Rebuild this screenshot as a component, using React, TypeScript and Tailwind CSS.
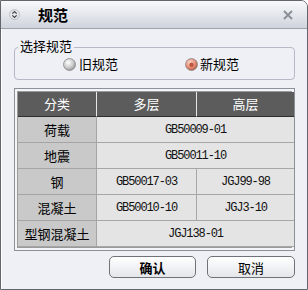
import React from "react";

const cjk = { fontFamily: '"Noto Sans CJK SC", "Noto Sans", sans-serif' };
const mono = { fontFamily: '"Liberation Mono", monospace', letterSpacing: "-1.1px" };

function Radio({ checked }: { checked?: boolean }) {
  return (
    <svg width="13" height="13" viewBox="0 0 13 13">
      <defs>
        <radialGradient id="rg0" cx="40%" cy="35%" r="70%">
          <stop offset="0%" stopColor="#ffffff" />
          <stop offset="60%" stopColor="#c9c9c9" />
          <stop offset="100%" stopColor="#8e8e8e" />
        </radialGradient>
        <radialGradient id="rg1" cx="40%" cy="35%" r="70%">
          <stop offset="0%" stopColor="#fbe1d8" />
          <stop offset="55%" stopColor="#e5907a" />
          <stop offset="100%" stopColor="#b0553f" />
        </radialGradient>
      </defs>
      <circle cx="6.5" cy="6.5" r="6" fill={checked ? "url(#rg1)" : "url(#rg0)"} stroke="#8a8a8a" strokeWidth="0.8" />
      {checked && <circle cx="6.5" cy="6.8" r="2.2" fill="#c0553d" />}
    </svg>
  );
}

function NameCell({ children }: { children: React.ReactNode }) {
  return (
    <div className="flex items-center justify-center bg-[#c9c9c9] border-b border-r border-[#a5a5a5]">
      <span className="block w-full text-center text-[13px] text-black" style={cjk}>
        {children}
      </span>
    </div>
  );
}

function CodeCell({ children, span, last }: { children: React.ReactNode; span?: boolean; last?: boolean }) {
  return (
    <div
      className={
        "flex items-center justify-center bg-[#e4e4e4] border-b border-[#a7a7a7] " +
        (span ? "col-span-2 " : "") +
        (last ? "" : "border-r ")
      }
    >
      <span className="block w-full text-center text-[12px] text-[#111]" style={mono}>
        {children}
      </span>
    </div>
  );
}

export default function App() {
  const rows: { name: string; a: string; b?: string }[] = [
    { name: "荷载", a: "GB50009-01" },
    { name: "地震", a: "GB50011-10" },
    { name: "钢", a: "GB50017-03", b: "JGJ99-98" },
    { name: "混凝土", a: "GB50010-10", b: "JGJ3-10" },
    { name: "型钢混凝土", a: "JGJ138-01" },
  ];
  return (
    <div
      className="w-[308px] h-[290px] flex flex-col border border-[#62656c] rounded-tr-[7px] bg-[#eef0f5] overflow-hidden"
      style={cjk}
    >
      <div className="h-[28px] flex items-center bg-gradient-to-b from-[#f8f9fb] via-[#e4e7ec] to-[#cfd4dc] border-b border-[#9ea3ad] pl-[8px] pr-[14px]">
        <svg width="11" height="11" viewBox="0 0 11 11">
          <circle cx="5.5" cy="5.5" r="5" fill="#e3e6ea" stroke="#b4b8bf" strokeWidth="0.8" />
          <path d="M3.3 4.6 L5.5 2.6 L7.7 4.6" fill="none" stroke="#444" strokeWidth="1.2" />
          <path d="M3.3 6.4 L5.5 8.4 L7.7 6.4" fill="none" stroke="#444" strokeWidth="1.2" />
        </svg>
        <span className="ml-[18px] text-[15px] font-bold text-black leading-none">规范</span>
        <span className="ml-auto">
          <svg width="10" height="10" viewBox="0 0 10 10">
            <path d="M1 1 L9 9 M9 1 L1 9" stroke="#8c9098" strokeWidth="2" />
          </svg>
        </span>
      </div>
      <div className="flex-1 flex flex-col px-[12px] border-l border-white">
        <div className="relative mt-[18px] h-[33px] border border-[#b6b9c6] rounded-[4px] flex items-center">
          <span className="absolute -top-[10px] left-[3px] px-[2px] bg-[#eef0f5] text-[13px] leading-[16px] text-black">选择规范</span>
          <div className="flex items-center ml-[48px] mt-[1px]">
            <Radio />
            <span className="ml-[3px] text-[13px] text-black">旧规范</span>
          </div>
          <div className="flex items-center ml-[67px] mt-[1px]">
            <Radio checked />
            <span className="ml-[2px] text-[13px] text-black">新规范</span>
          </div>
        </div>
        <div className="mt-[8px] border border-[#8d9099] p-[2px] bg-[#f4f5f8]">
          <div className="grid grid-cols-[79px_100px_97px] grid-rows-[25px_26px_26px_26px_26px_26px] border border-[#9a9a9a]">
            <div className="bg-[#5c5c5c] text-white text-[13px] flex items-center justify-center border-r border-[#e6e6e6] border-b border-b-[#2e2e2e]">分类</div>
            <div className="bg-[#5c5c5c] text-white text-[13px] flex items-center justify-center border-r border-[#e6e6e6] border-b border-b-[#2e2e2e]">多层</div>
            <div className="bg-[#5c5c5c] text-white text-[13px] flex items-center justify-center border-b border-b-[#2e2e2e]">高层</div>
            {rows.map((r) => (
              <React.Fragment key={r.name}>
                <NameCell>{r.name}</NameCell>
                {r.b ? (
                  <>
                    <CodeCell>{r.a}</CodeCell>
                    <CodeCell last>{r.b}</CodeCell>
                  </>
                ) : (
                  <CodeCell span last>
                    {r.a}
                  </CodeCell>
                )}
              </React.Fragment>
            ))}
          </div>
        </div>
        <div className="flex justify-end gap-[11px] mt-[5px]">
          <button className="w-[87px] h-[22px] rounded-[5px] border border-[#6f7277] bg-gradient-to-b from-[#ffffff] to-[#e4e6ea] text-[13px] font-bold text-black leading-none">确认</button>
          <button className="w-[88px] h-[22px] rounded-[5px] border border-[#6f7277] bg-gradient-to-b from-[#ffffff] to-[#e4e6ea] text-[13px] text-black leading-none">取消</button>
        </div>
      </div>
    </div>
  );
}
